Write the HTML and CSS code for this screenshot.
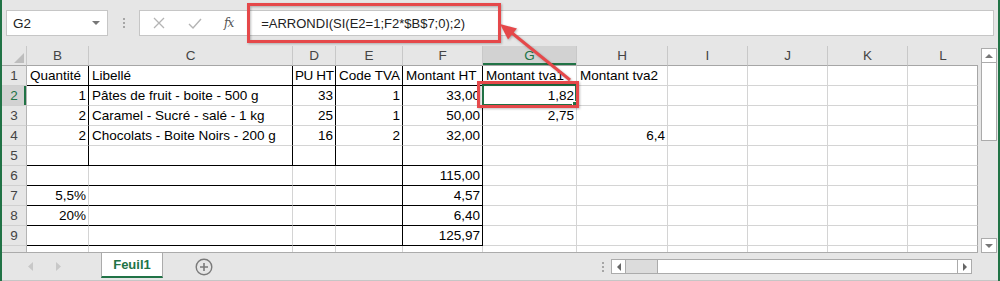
FILE: index.html
```html
<!DOCTYPE html>
<html lang="fr">
<head>
    <meta charset="UTF-8">
    <title>Feuil1</title>
    <link rel="stylesheet" href="styles.css">
</head>
<body>
    <div class="app">
        <div class="formula-bar">
            <div class="name-box">
                <span>G2</span>
                <svg width="8" height="4" viewBox="0 0 8 4"><path d="M0 0h8L4 4z" fill="#777"/></svg>
            </div>
            <div class="grip"><i></i><i></i><i></i></div>
            <div class="formula">
                <svg class="btn-cancel" width="12" height="12" viewBox="0 0 12 12"><path d="M1 1l10 10M11 1L1 11" stroke="#b4b4b4" stroke-width="1.3"/></svg>
                <svg class="btn-ok" width="14" height="11" viewBox="0 0 14 11"><path d="M1 6l4 4 8-9" stroke="#b4b4b4" stroke-width="1.4" fill="none"/></svg>
                <span class="fx">fx</span>
                <span class="formula-text">=ARRONDI(SI(E2=1;F2*$B$7;0);2)</span>
            </div>
        </div>

        <div class="sheet">
            <div class="grid-wrap">
                <table class="grid">
                    <colgroup>
                        <col class="c-rh"><col class="c-b"><col class="c-c"><col class="c-d"><col class="c-e"><col class="c-f">
                        <col class="c-g"><col class="c-h"><col class="c-i"><col class="c-j"><col class="c-k"><col class="c-l">
                    </colgroup>
                    <tr class="col-head">
                        <th class="corner"><svg width="10" height="10" viewBox="0 0 10 10"><path d="M10 0v10H0z" fill="#bdbdbd"/></svg></th>
                        <th>B</th><th>C</th><th>D</th><th>E</th><th>F</th>
                        <th class="on">G</th><th>H</th><th>I</th><th>J</th><th>K</th><th>L</th>
                    </tr>
                    <tr>
                        <th class="rh">1</th>
                        <td class="r b">Quantité</td><td class="r b">Libellé</td><td class="r b tight">PU HT</td>
                        <td class="r b">Code TVA</td><td class="r b">Montant HT</td>
                        <td>Montant tva1</td><td>Montant tva2</td><td></td><td></td><td></td><td></td>
                    </tr>
                    <tr>
                        <th class="rh on">2</th>
                        <td class="r num">1</td><td class="r">Pâtes de fruit - boite - 500 g</td><td class="r num">33</td>
                        <td class="r num">1</td><td class="r num">33,00</td>
                        <td class="num sel">1,82</td><td></td><td></td><td></td><td></td><td></td>
                    </tr>
                    <tr>
                        <th class="rh">3</th>
                        <td class="r num">2</td><td class="r">Caramel - Sucré - salé - 1 kg</td><td class="r num">25</td>
                        <td class="r num">1</td><td class="r num">50,00</td>
                        <td class="num">2,75</td><td></td><td></td><td></td><td></td><td></td>
                    </tr>
                    <tr>
                        <th class="rh">4</th>
                        <td class="r num">2</td><td class="r">Chocolats - Boite Noirs - 200 g</td><td class="r num">16</td>
                        <td class="r num">2</td><td class="r num">32,00</td>
                        <td></td><td class="num">6,4</td><td></td><td></td><td></td><td></td>
                    </tr>
                    <tr>
                        <th class="rh">5</th>
                        <td class="r b"></td><td class="r b"></td><td class="r b"></td><td class="r b"></td><td class="r b"></td>
                        <td></td><td></td><td></td><td></td><td></td><td></td>
                    </tr>
                    <tr>
                        <th class="rh">6</th>
                        <td class="b"></td><td class="b"></td><td class="b"></td><td class="r b"></td><td class="r b num">115,00</td>
                        <td></td><td></td><td></td><td></td><td></td><td></td>
                    </tr>
                    <tr>
                        <th class="rh">7</th>
                        <td class="b num">5,5%</td><td class="b"></td><td class="b"></td><td class="r b"></td><td class="r b num">4,57</td>
                        <td></td><td></td><td></td><td></td><td></td><td></td>
                    </tr>
                    <tr>
                        <th class="rh">8</th>
                        <td class="b num">20%</td><td class="b"></td><td class="b"></td><td class="r b"></td><td class="r b num">6,40</td>
                        <td></td><td></td><td></td><td></td><td></td><td></td>
                    </tr>
                    <tr>
                        <th class="rh">9</th>
                        <td class="b"></td><td class="b"></td><td class="b"></td><td class="r b"></td><td class="r b num">125,97</td>
                        <td></td><td></td><td></td><td></td><td></td><td></td>
                    </tr>
                    <tr>
                        <th class="rh"></th>
                        <td></td><td></td><td></td><td></td><td></td><td></td><td></td><td></td><td></td><td></td><td></td>
                    </tr>
                </table>
            </div>
            <div class="vscroll">
                <div class="sb-btn"><svg width="8" height="4" viewBox="0 0 8 4"><path d="M4 0l4 4H0z" fill="#777"/></svg></div>
                <div class="v-thumb"></div>
                <div class="sb-btn down"><svg width="8" height="4" viewBox="0 0 8 4"><path d="M0 0h8L4 4z" fill="#777"/></svg></div>
            </div>
        </div>

        <div class="tabs">
            <div class="tab-nav">
                <svg width="5" height="9" viewBox="0 0 5 9"><path d="M5 0v9L0 4.5z" fill="#c8c8c8"/></svg>
                <svg width="5" height="9" viewBox="0 0 5 9"><path d="M0 0v9l5-4.5z" fill="#c8c8c8"/></svg>
            </div>
            <div class="tab">Feuil1</div>
            <svg class="add-sheet" width="18" height="18" viewBox="0 0 18 18">
                <circle cx="9" cy="9" r="7.8" fill="none" stroke="#7a7a7a" stroke-width="1.4"/>
                <path d="M9 5v8M5 9h8" stroke="#7a7a7a" stroke-width="1.6"/>
            </svg>
            <div class="grip h-grip"><i></i><i></i><i></i></div>
            <div class="hscroll">
                <div class="sb-btn"><svg width="4" height="8" viewBox="0 0 4 8"><path d="M4 0v8L0 4z" fill="#666"/></svg></div>
                <div class="h-track"></div>
                <div class="h-thumb"></div>
                <div class="sb-btn"><svg width="4" height="8" viewBox="0 0 4 8"><path d="M0 0v8l4-4z" fill="#666"/></svg></div>
            </div>
        </div>

        <svg class="callouts" width="1000" height="281" viewBox="0 0 1000 281">
            <g class="mark">
                <rect x="248.5" y="4.5" width="251" height="37"/>
                <rect x="478.5" y="82.5" width="99" height="24"/>
                <line x1="570" y1="80" x2="512" y2="33"/>
                <polygon points="500,24 517,28.5 508,39.5"/>
            </g>
        </svg>
    </div>
</body>
</html>
```

FILE: styles.css
```css
* {
    margin: 0;
    padding: 0;
    box-sizing: border-box;
}

body {
    width: 1000px;
    height: 281px;
    overflow: hidden;
    background: #e6e6e6;
    font-family: "Liberation Sans", Arial, sans-serif;
}

.app {
    position: relative;
    width: 1000px;
    height: 281px;
    border-left: 2px solid #217346;
    border-right: 2px solid #217346;
    background: #e6e6e6;
}

/* formula bar */
.formula-bar {
    height: 46px;
    display: flex;
    align-items: flex-start;
    padding: 10px 4px 0 4px;
}

.name-box {
    width: 102px;
    height: 26px;
    background: #fff;
    border: 1px solid #c6c6c6;
    display: flex;
    align-items: center;
    justify-content: space-between;
    padding: 0 7px 0 6px;
    font-size: 13.5px;
    color: #222;
}

.grip {
    width: 31px;
    height: 26px;
    display: flex;
    flex-direction: column;
    align-items: center;
    justify-content: center;
    gap: 2px;
}

.grip i {
    width: 2px;
    height: 2px;
    background: #a6a6a6;
}

.formula {
    flex: 1;
    height: 26px;
    background: #fff;
    border: 1px solid #c6c6c6;
    display: flex;
    align-items: center;
}

.btn-cancel {
    margin-left: 13px;
}

.btn-ok {
    margin-left: 23px;
}

.fx {
    margin-left: 22px;
    font-family: "DejaVu Serif", serif;
    font-style: italic;
    font-size: 12px;
    color: #555;
    letter-spacing: -1px;
}

.formula-text {
    margin-left: 28px;
    font-size: 13px;
    color: #222;
}

/* sheet */
.sheet {
    display: flex;
    height: 207px;
}

.grid-wrap {
    width: 976px;
    height: 207px;
    overflow: hidden;
    background: #fff;
    border-bottom: 1px solid #ababab;
}

.grid {
    table-layout: fixed;
    width: 976px;
    border-collapse: separate;
    border-spacing: 0;
    font-size: 13.5px;
}

.c-rh { width: 25px; }
.c-b { width: 62px; }
.c-c { width: 204px; }
.c-d { width: 43px; }
.c-e { width: 67px; }
.c-f { width: 80px; }
.c-g { width: 94px; }
.c-h { width: 91px; }
.c-i { width: 80px; }
.c-j { width: 80px; }
.c-k { width: 80px; }
.c-l { width: 70px; }

.grid td,
.grid th {
    box-sizing: border-box;
    height: 20px;
    padding: 0 2px 0 3px;
    border-right: 1px solid #d4d4d4;
    border-bottom: 1px solid #d4d4d4;
    white-space: nowrap;
    overflow: hidden;
    text-align: left;
    font-weight: normal;
    color: #000;
    line-height: 19px;
}

.grid td.tight {
    padding: 0 0 0 2px;
    letter-spacing: -0.4px;
}

.grid td:last-child {
    border-right-color: #a6a6a6;
}

.grid th {
    background: #e6e6e6;
    color: #444;
    text-align: center;
    padding: 0;
}

.col-head th {
    border-right-color: #c8c8c8;
    border-bottom-color: #a6a6a6;
}

.col-head th:last-child {
    border-right: none;
}

.grid .corner {
    text-align: right;
    vertical-align: bottom;
    padding: 0 2px 2px 0;
    line-height: 0;
}

.grid .rh {
    border-right-color: #b4b4b4;
    border-bottom-color: #d0d0d0;
}

.grid th.on {
    background: #d2d2d2;
    color: #217346;
}

.col-head th.on {
    box-shadow: inset 0 -2px 0 #217346;
}

.grid .rh.on {
    box-shadow: inset -2px 0 0 #217346;
}

.grid td.num {
    text-align: right;
}

.grid td.r {
    border-right-color: #000;
}

.grid td.b {
    border-bottom-color: #000;
}

.grid td.sel {
    position: relative;
    overflow: visible;
}

.grid td.sel::before {
    content: "";
    position: absolute;
    top: -2px;
    left: -1px;
    right: -1px;
    bottom: -1px;
    border: 2px solid #217346;
}

.grid td.sel::after {
    content: "";
    position: absolute;
    right: -3px;
    bottom: -3px;
    width: 5px;
    height: 5px;
    background: #217346;
    border: 1px solid #fff;
}

/* scrollbars */
.vscroll {
    width: 16px;
    height: 207px;
    margin-left: 3px;
    padding-top: 2px;
    display: flex;
    flex-direction: column;
}

.sb-btn {
    width: 16px;
    height: 15px;
    background: #fff;
    border: 1px solid #ababab;
    display: flex;
    align-items: center;
    justify-content: center;
}

.sb-btn.down {
    margin-top: auto;
}

.v-thumb {
    height: 78px;
    background: #fff;
    border: 1px solid #ababab;
    border-top: none;
}

.tabs {
    height: 28px;
    border-bottom: 1px solid #c6c6c6;
    display: flex;
    align-items: flex-start;
}

.tab-nav {
    width: 99px;
    height: 27px;
    display: flex;
    align-items: center;
    padding-left: 26px;
    gap: 23px;
}

.tab {
    width: 62px;
    height: 25px;
    background: #fff;
    border-left: 1px solid #ababab;
    border-right: 1px solid #ababab;
    border-bottom: 2px solid #217346;
    color: #217346;
    font-weight: bold;
    font-size: 13px;
    text-align: center;
    line-height: 24px;
}

.add-sheet {
    margin: 5px 0 0 32px;
}

.h-grip {
    width: 16px;
    height: 27px;
    margin-left: 382px;
}

.hscroll {
    margin: 6px 0 0 0;
    width: 361px;
    height: 15px;
    display: flex;
}

.hscroll .sb-btn {
    width: 15px;
}

.h-track {
    width: 31px;
    background: #dcdcdc;
    border-top: 1px solid #ababab;
    border-bottom: 1px solid #ababab;
}

.h-thumb {
    flex: 1;
    background: #fff;
    border: 1px solid #ababab;
    border-right: none;
}

/* annotations */
.callouts {
    position: absolute;
    top: 0;
    left: -2px;
    pointer-events: none;
}

.mark {
    filter: drop-shadow(1px 1px 1px rgba(0, 0, 0, 0.25));
}

.mark rect,
.mark line {
    fill: none;
    stroke: #e5484a;
    stroke-width: 3;
}

.mark polygon {
    fill: #e5484a;
}
```
